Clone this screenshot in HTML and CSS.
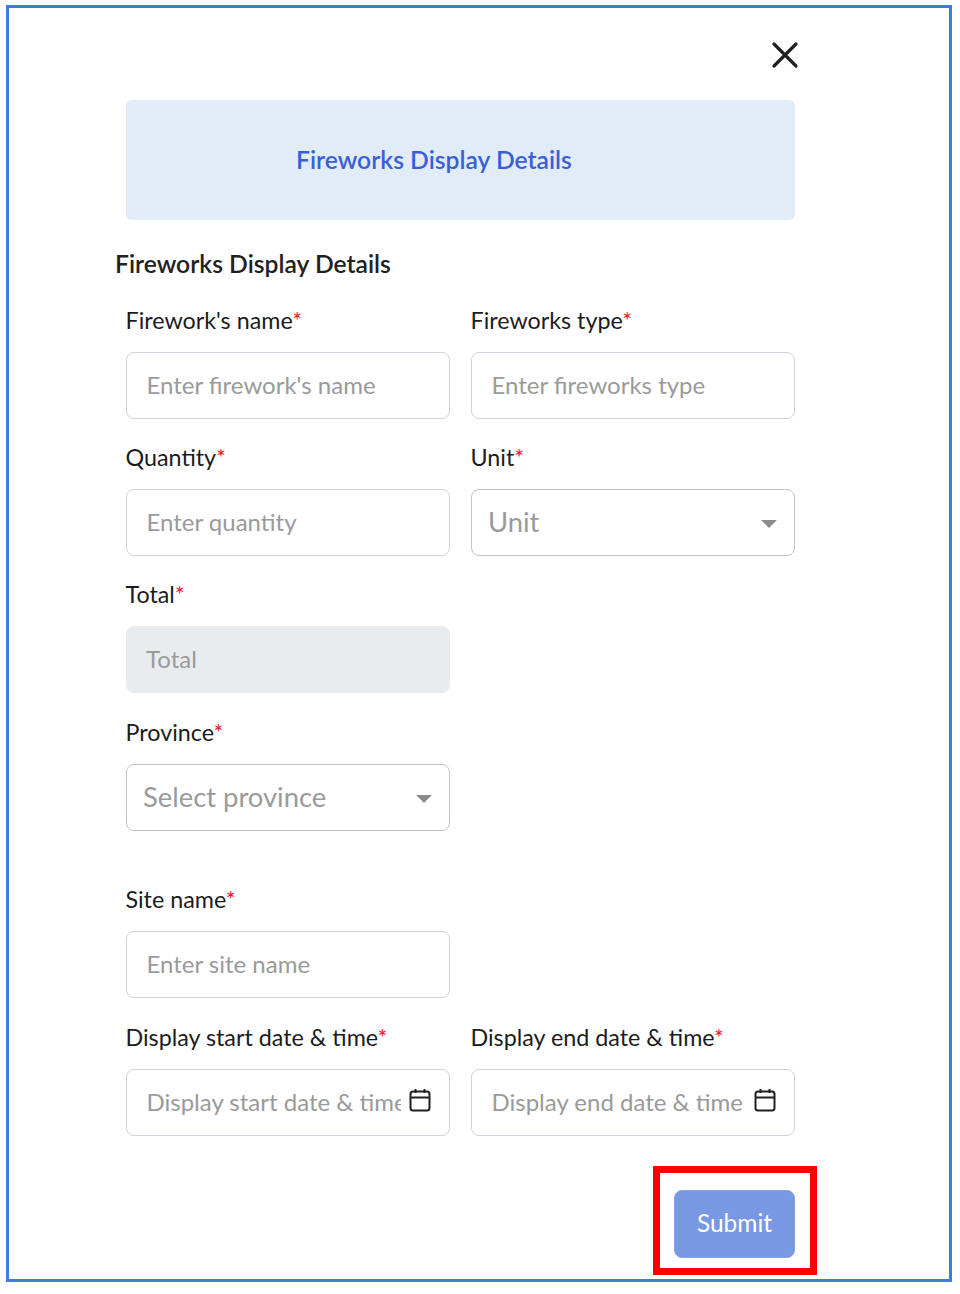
FILE: index.html
```html
<!DOCTYPE html>
<html>
<head>
    <title>Fireworks Display Details</title>
    <link rel="stylesheet" href="styles.css">
</head>
<body>
    <div class="frame">
        <div class="close-row">
            <svg class="close-icon" width="28" height="28" viewBox="0 0 28 28">
                <path d="M3 3L25 25M25 3L3 25" fill="none" stroke="#212121" stroke-width="3.2" stroke-linecap="round"/>
            </svg>
        </div>

        <div class="banner">Fireworks Display Details</div>
        <h2 class="section-title">Fireworks Display Details</h2>

        <div class="form-row">
            <div class="field">
                <label class="field-label">Firework's name<span class="req">*</span></label>
                <div class="input"><span class="placeholder">Enter firework's name</span></div>
            </div>
            <div class="field">
                <label class="field-label">Fireworks type<span class="req">*</span></label>
                <div class="input"><span class="placeholder">Enter fireworks type</span></div>
            </div>
        </div>

        <div class="form-row">
            <div class="field">
                <label class="field-label">Quantity<span class="req">*</span></label>
                <div class="input"><span class="placeholder">Enter quantity</span></div>
            </div>
            <div class="field">
                <label class="field-label">Unit<span class="req">*</span></label>
                <div class="input select"><span class="placeholder">Unit</span><i class="caret"></i></div>
            </div>
        </div>

        <div class="form-row total-row">
            <div class="field">
                <label class="field-label">Total<span class="req">*</span></label>
                <div class="input disabled"><span class="placeholder">Total</span></div>
            </div>
        </div>

        <div class="form-row province-row">
            <div class="field">
                <label class="field-label">Province<span class="req">*</span></label>
                <div class="input select"><span class="placeholder">Select province</span><i class="caret"></i></div>
            </div>
        </div>

        <div class="form-row site-row">
            <div class="field">
                <label class="field-label">Site name<span class="req">*</span></label>
                <div class="input"><span class="placeholder">Enter site name</span></div>
            </div>
        </div>

        <div class="form-row">
            <div class="field">
                <label class="field-label">Display start date &amp; time<span class="req">*</span></label>
                <div class="input date">
                    <span class="placeholder">Display start date &amp; time</span>
                    <svg class="cal-icon" width="22" height="24" viewBox="0 0 22 24">
                        <rect x="1.5" y="3.5" width="19" height="19" rx="2.5" fill="none" stroke="#212121" stroke-width="2"/>
                        <path d="M1.5 9.5H20.5M6.5 1V5M15.5 1V5" fill="none" stroke="#212121" stroke-width="2"/>
                    </svg>
                </div>
            </div>
            <div class="field">
                <label class="field-label">Display end date &amp; time<span class="req">*</span></label>
                <div class="input date">
                    <span class="placeholder">Display end date &amp; time</span>
                    <svg class="cal-icon" width="22" height="24" viewBox="0 0 22 24">
                        <rect x="1.5" y="3.5" width="19" height="19" rx="2.5" fill="none" stroke="#212121" stroke-width="2"/>
                        <path d="M1.5 9.5H20.5M6.5 1V5M15.5 1V5" fill="none" stroke="#212121" stroke-width="2"/>
                    </svg>
                </div>
            </div>
        </div>

        <div class="actions">
            <div class="highlight"><button class="submit-button">Submit</button></div>
        </div>
    </div>
</body>
</html>
```

FILE: styles.css
```css
body {
    margin: 0;
    background-color: #fff;
    font-family: "Lato", "Noto Sans", sans-serif;
    color: #212529;
}
.frame {
    box-sizing: border-box;
    width: 946px;
    height: 1277px;
    margin: 5px 0 0 6px;
    border: 3px solid #3f7bdc;
    padding: 0 0 0 117px;
}
.close-row {
    display: flex;
    justify-content: flex-end;
    width: 673px;
    height: 92px;
    padding-top: 33px;
    box-sizing: border-box;
}
.close-icon {
    display: block;
}
.banner {
    display: flex;
    align-items: center;
    width: 669px;
    height: 120px;
    padding: 0 0 2px 170px;
    box-sizing: border-box;
    background-color: #e1ecf8;
    border-radius: 6px;
    color: #3a5fd6;
    font-size: 24.7px;
    font-weight: 600;
}
.section-title {
    margin: 30px 0 30px -11px;
    height: 28px;
    line-height: 28px;
    font-size: 24.7px;
    font-weight: 600;
    color: #212121;
}
.form-row {
    display: grid;
    grid-template-columns: 324px 324px;
    column-gap: 21px;
    margin-bottom: 26px;
}
.total-row {
    margin-bottom: 27px;
}
.province-row {
    margin-bottom: 56px;
}
.site-row {
    margin-bottom: 27px;
}
.field-label {
    display: block;
    height: 24px;
    line-height: 24px;
    margin: 0 0 20px -0.5px;
    font-size: 23.3px;
    color: #1c1c1c;
}
.req {
    color: #f0163a;
}
.input {
    display: flex;
    align-items: center;
    box-sizing: border-box;
    height: 67px;
    padding: 0 18px 3px 19.5px;
    border: 1.5px solid #ced4da;
    border-radius: 8px;
    background-color: #fff;
}
.placeholder {
    flex: 1;
    overflow: hidden;
    white-space: nowrap;
    font-size: 24px;
    color: #9a9a9a;
}
.select {
    padding: 0 18px 3px 16px;
    border-color: #c4c4c4;
}
.select .placeholder {
    font-size: 27.4px;
}
.disabled {
    padding-left: 19px;
    background-color: #e9ecef;
    border-color: #e9ecef;
}
.caret {
    width: 0;
    height: 0;
    margin: 5px -1px 0 0;
    border-left: 8px solid transparent;
    border-right: 8px solid transparent;
    border-top: 8px solid #8c8c8c;
}
.cal-icon {
    flex: none;
    margin: 0 0 3px 8px;
}
.date {
    padding-right: 18px;
}
.actions {
    display: flex;
    justify-content: flex-end;
    width: 691px;
}
.highlight {
    margin-top: 4px;
    padding: 17px 15px 10px 14px;
    border: 7px solid #ff0000;
}
.submit-button {
    display: block;
    width: 121px;
    height: 68px;
    padding: 0 0 4px;
    border: 1px solid #84a0e6;
    border-radius: 8px;
    background-color: #7998e3;
    color: #fff;
    font-family: inherit;
    font-size: 24.5px;
}
```
